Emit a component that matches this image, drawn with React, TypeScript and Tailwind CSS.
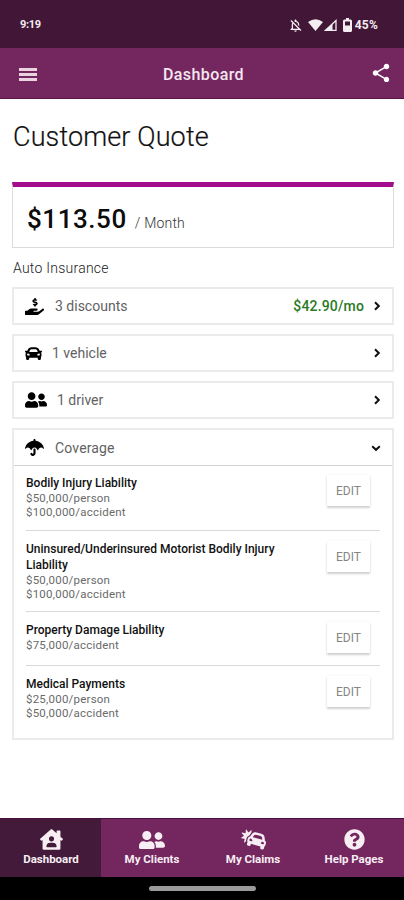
import type { ReactNode } from "react";
import {
  FaCar,
  FaCarCrash,
  FaHandHoldingUsd,
  FaHouseUser,
  FaQuestionCircle,
  FaUmbrella,
  FaUserFriends,
} from "react-icons/fa";
import { MdOutlineNotificationsOff, MdShare } from "react-icons/md";

function Chevron({ down = false }: { down?: boolean }) {
  return (
    <svg width="10" height="10" viewBox="0 0 10 10" fill="none" stroke="#111" strokeWidth="2">
      <path d={down ? "M1.2 3.2 5 6.8 8.8 3.2" : "M3 1.2 6.8 5 3 8.8"} />
    </svg>
  );
}

function StatusBar() {
  return (
    <div className="flex h-12 items-center justify-between bg-[#421636] pl-5 pr-[26px] pt-[2px] text-[11px] font-bold text-[#f3edf1]">
      <span className="tracking-[-0.3px]">9:19</span>
      <div className="flex items-center">
        <MdOutlineNotificationsOff size={15} className="mr-[5px]" />
        <svg width="15" height="12" viewBox="0 0 15 12" fill="currentColor" className="mr-[1px]">
          <path d="M7.5 12 0 3Q7.500-2.500 15 3Z" />
        </svg>
        <svg width="13" height="12" viewBox="0 0 13 12" className="mr-[6px]">
          <path d="M12 1.500V11.300H1.500Z" fill="none" stroke="currentColor" strokeWidth="1.300" />
          <path d="M8.500 4.500V11.500H1Z" fill="currentColor" />
        </svg>
        <svg width="9" height="14" viewBox="0 0 9 14" className="mr-[3px]">
          <path
            fill="currentColor"
            fillRule="evenodd"
            d="M3 0h3v1.500h1.500A1.500 1.500 0 0 1 9 3v9.500A1.500 1.500 0 0 1 7.500 14h-6A1.500 1.500 0 0 1 0 12.500V3a1.500 1.500 0 0 1 1.500-1.500H3ZM2 3.500v4h5v-4Z"
          />
        </svg>
        <span className="text-xs tracking-[0.2px]">45%</span>
      </div>
    </div>
  );
}

function AppBar() {
  return (
    <header className="flex h-[51px] items-center justify-between border-b border-[#5a1248] bg-[#74265f] pl-[19px] pr-3 text-[#f5e6ef]">
      <button aria-label="Menu" className="flex w-[18px] flex-col gap-[2px] pt-[2px]">
        <span className="h-[3px] bg-[#e8d3df]" />
        <span className="h-[3px] bg-[#e8d3df]" />
        <span className="h-[3px] bg-[#e8d3df]" />
      </button>
      <h1 className="pt-[3px] text-base font-medium tracking-[0.4px]">Dashboard</h1>
      <MdShare size={22} color="#fff" />
    </header>
  );
}

function SummaryRow({
  icon,
  label,
  value,
  iconClass,
}: {
  icon: ReactNode;
  label: string;
  value?: string;
  iconClass: string;
}) {
  return (
    <div className="flex h-[38px] items-center border-2 border-[#ebebeb] pl-[11px] pr-[10px]">
      <span className={iconClass}>{icon}</span>
      <span className="text-sm text-[#626262]">{label}</span>
      <span className="ml-auto mr-2 text-sm font-medium tracking-[0.15px] text-[#2a7a1e]">{value}</span>
      <Chevron />
    </div>
  );
}

function CoverageItem({
  title,
  lines,
  itemClass,
}: {
  title: string;
  lines: string[];
  itemClass: string;
}) {
  return (
    <div className={itemClass}>
      <div className="w-[262px]">
        <div className="text-xs font-medium leading-4 text-[#111]">{title}</div>
        {lines.map((line) => (
          <div key={line} className="text-[11.5px] leading-[14px] tracking-[0.22px] text-[#6a6a6a]">
            {line}
          </div>
        ))}
      </div>
      <button className="mr-[10px] h-[31px] w-[43px] bg-white text-xs text-[#858585] shadow-[0_2px_2px_rgba(0,0,0,0.18),0_0_2px_rgba(0,0,0,0.06)]">
        EDIT
      </button>
    </div>
  );
}

function NavItem({ icon, label, active = false }: { icon: ReactNode; label: string; active?: boolean }) {
  return (
    <div
      className={
        active
          ? "flex flex-1 flex-col items-center bg-[#431a39] pl-px pt-[9px]"
          : "flex flex-1 flex-col items-center pl-px pt-[9px]"
      }
    >
      <span className="flex h-[23px] items-center">{icon}</span>
      <span className="text-[11.5px] font-bold leading-[16px]">{label}</span>
    </div>
  );
}

export default function App() {
  return (
    <div className="flex h-[900px] w-[404px] flex-col overflow-hidden bg-white font-[Roboto,sans-serif]">
      <StatusBar />
      <AppBar />
      <main className="flex-1 pl-3 pr-[10px]">
        <h2 className="mt-[20px] pl-px text-[27px] font-light leading-[36px] tracking-[0.12px] text-[#111] [-webkit-text-stroke:0.2px_#111]">
          Customer Quote
        </h2>
        <section className="mt-[27px] flex h-[66px] items-center border border-t-[5px] border-[#dcdcdc] border-t-[#a30c8c] pl-[14px]">
          <p className="flex items-baseline gap-2 pt-[3px]">
            <span className="text-[26px] font-medium leading-8 tracking-[0.55px] text-[#0c0c0c]">$113.50</span>
            <span className="text-sm font-light tracking-[0.2px] text-[#333]">/ Month</span>
          </p>
        </section>
        <h3 className="mt-[10px] pl-px text-sm font-light leading-5 tracking-[0.25px] text-[#222]">Auto Insurance</h3>
        <div className="mt-[9px] flex flex-col gap-[9px]">
          <SummaryRow
            icon={<FaHandHoldingUsd size={19} />}
            label="3 discounts"
            value="$42.90/mo"
            iconClass="mr-[11px]"
          />
          <SummaryRow icon={<FaCar size={17} />} label="1 vehicle" iconClass="mr-[10px]" />
          <SummaryRow icon={<FaUserFriends size={22} />} label="1 driver" iconClass="mr-[10px]" />
          <section className="h-[312px] border-2 border-[#ebebeb]">
            <div className="flex h-9 items-center border-b border-[#d2d2d2] pl-[11px] pr-[11px]">
              <FaUmbrella size={19} className="mr-[11px]" />
              <span className="text-sm tracking-[0.15px] text-[#626262]">Coverage</span>
              <span className="ml-auto">
                <Chevron down />
              </span>
            </div>
            <div className="pl-3 pr-[12px]">
              <CoverageItem
                title="Bodily Injury Liability"
                lines={["$50,000/person", "$100,000/accident"]}
                itemClass="flex h-[65px] items-start justify-between border-b border-[#d9d9d9] pt-[9px]"
              />
              <CoverageItem
                title="Uninsured/Underinsured Motorist Bodily Injury Liability"
                lines={["$50,000/person", "$100,000/accident"]}
                itemClass="flex h-[81px] items-start justify-between border-b border-[#d9d9d9] pt-[10px]"
              />
              <CoverageItem
                title="Property Damage Liability"
                lines={["$75,000/accident"]}
                itemClass="flex h-[54px] items-start justify-between border-b border-[#d9d9d9] pt-[10px]"
              />
              <CoverageItem
                title="Medical Payments"
                lines={["$25,000/person", "$50,000/accident"]}
                itemClass="flex items-start justify-between pt-[10px]"
              />
            </div>
          </section>
        </div>
      </main>
      <nav className="flex h-[59px] border-t border-[#4a0f3c] bg-[#74265f] text-[#f7eef4]">
        <NavItem active icon={<FaHouseUser size={23} />} label="Dashboard" />
        <NavItem icon={<FaUserFriends size={26} />} label="My Clients" />
        <NavItem icon={<FaCarCrash size={25} />} label="My Claims" />
        <NavItem icon={<FaQuestionCircle size={21} />} label="Help Pages" />
      </nav>
      <div className="flex h-[23px] justify-center bg-black pt-[9px]">
        <div className="h-[5px] w-[107px] rounded-full bg-[#9a9a9a]" />
      </div>
    </div>
  );
}
